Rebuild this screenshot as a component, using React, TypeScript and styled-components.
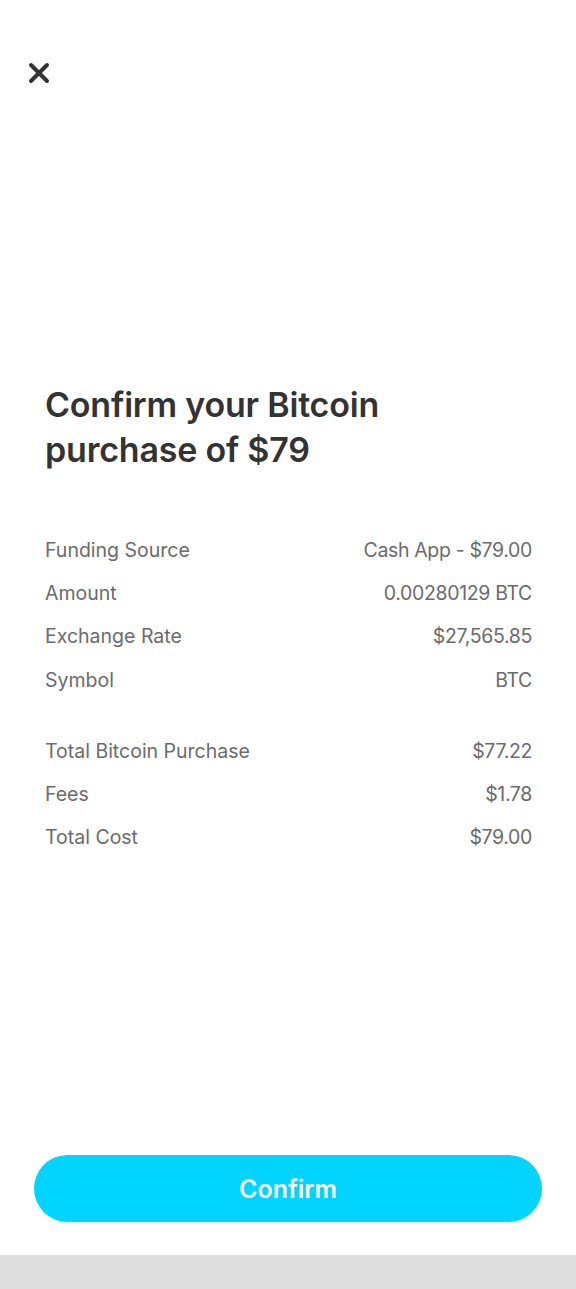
import React from "react";
import styled, { createGlobalStyle } from "styled-components";

const Global = createGlobalStyle`
  html, body { margin: 0; padding: 0; background: #ffffff; }
  body { font-family: Inter, "Noto Sans", sans-serif; }
`;

const Screen = styled.div`
  width: 576px;
  height: 1289px;
  display: flex;
  flex-direction: column;
  background: #ffffff;
`;

const Header = styled.div`
  height: 146px;
  padding: 60px 0 0 26px;
  box-sizing: border-box;
`;

const CloseButton = styled.button`
  width: 26px;
  height: 26px;
  padding: 0;
  border: none;
  background: transparent;
  display: flex;
  align-items: center;
  justify-content: center;
`;

const Content = styled.div`
  flex: 1;
  padding: 236px 44px 0 45px;
  display: flex;
  flex-direction: column;
`;

const Title = styled.h1`
  margin: 0 0 56px;
  font-size: 34px;
  line-height: 45px;
  font-weight: 600;
  color: #333333;
  letter-spacing: -0.2px;
`;

const Group = styled.div<{ $gap?: number }>`
  display: flex;
  flex-direction: column;
  margin-bottom: ${(p) => p.$gap ?? 0}px;
`;

const Row = styled.div`
  display: flex;
  justify-content: space-between;
  align-items: center;
  height: 43.3px;
  font-size: 19.5px;
  color: #6b6b6b;
`;

const Value = styled.span`
  letter-spacing: -0.35px;
`;

const Footer = styled.div`
  padding: 0 34px 33px;
`;

const ConfirmButton = styled.button`
  width: 100%;
  height: 67px;
  border: none;
  border-radius: 34px;
  background: #00d4ff;
  color: #ffffff;
  font-family: Inter, "Noto Sans", sans-serif;
  font-size: 25px;
  font-weight: 600;
`;

const NavBar = styled.div`
  height: 34px;
  background: #dedede;
`;

const rows1 = [
  ["Funding Source", "Cash App - $79.00"],
  ["Amount", "0.00280129 BTC"],
  ["Exchange Rate", "$27,565.85"],
  ["Symbol", "BTC"],
];
const rows2 = [
  ["Total Bitcoin Purchase", "$77.22"],
  ["Fees", "$1.78"],
  ["Total Cost", "$79.00"],
];

export default function App() {
  return (
    <Screen>
      <Global />
      <Header>
        <CloseButton aria-label="Close">
          <svg width="26" height="26" viewBox="0 0 26 26">
            <path d="M5 5 L21 21 M21 5 L5 21" stroke="#333" strokeWidth="4" strokeLinecap="round" />
          </svg>
        </CloseButton>
      </Header>
      <Content>
        <Title>
          Confirm your Bitcoin
          <br />
          purchase of $79
        </Title>
        <Group $gap={28}>
          {rows1.map(([l, v]) => (
            <Row key={l}>
              <span>{l}</span>
              <Value>{v}</Value>
            </Row>
          ))}
        </Group>
        <Group>
          {rows2.map(([l, v]) => (
            <Row key={l}>
              <span>{l}</span>
              <Value>{v}</Value>
            </Row>
          ))}
        </Group>
      </Content>
      <Footer>
        <ConfirmButton>Confirm</ConfirmButton>
      </Footer>
      <NavBar />
    </Screen>
  );
}
